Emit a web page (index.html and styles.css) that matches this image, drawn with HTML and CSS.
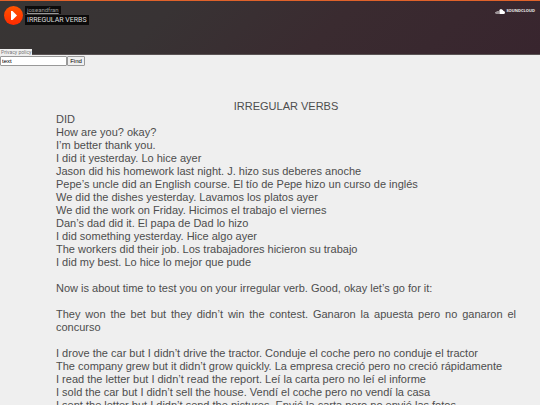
FILE: index.html
```html
<!DOCTYPE html>
<html lang="en">
<head>
    <meta charset="UTF-8">
    <meta name="viewport" content="width=device-width, initial-scale=1.0">
    <title>IRREGULAR VERBS</title>
    <link rel="stylesheet" href="styles.css">
</head>
<body>
    <!-- Audio player -->
    <header class="player">
        <button type="button" class="play" aria-label="Play">
            <svg viewBox="0 0 19 19" width="19" height="19">
                <path d="M7 5 L8.500 5 L13 9.500 L8.500 14 L7 14 Z" fill="#fff"/>
            </svg>
        </button>
        <div class="track">
            <a href="#" class="artist">joseandfran</a>
            <a href="#" class="title">IRREGULAR VERBS</a>
        </div>
        <a href="#" class="brand">
            <svg viewBox="0 0 20 10" width="10" height="5">
                <path d="M0 6h1v3H0zM2 5h1v5H2zM4 4h1v6H4zM6 4h1v6H6zM8 2h1v8H8z" fill="#fff"/>
                <path d="M9.500 1.200 Q11 0 13 .3 Q16.500 1 17 4 Q20 3.800 20 7 Q20 10 17 10 H9.500 Z" fill="#fff"/>
            </svg>
            SOUNDCLOUD
        </a>
        <a href="#" class="policy">Privacy policy</a>
    </header>

    <!-- Find in page -->
    <form class="find" id="findForm">
        <input type="text" value="text" aria-label="Text to find">
        <button type="submit">Find</button>
    </form>

    <!-- Transcript -->
    <main class="transcript">
        <h1>IRREGULAR VERBS</h1>
        <p>DID</p>
        <p>How are you? okay?</p>
        <p>I’m better thank you.</p>
        <p>I did it yesterday. Lo hice ayer</p>
        <p>Jason did his homework last night. J. hizo sus deberes anoche</p>
        <p>Pepe’s uncle did an English course. El tío de Pepe hizo un curso de inglés</p>
        <p>We did the dishes yesterday. Lavamos los platos ayer</p>
        <p>We did the work on Friday. Hicimos el trabajo el viernes</p>
        <p>Dan’s dad did it. El papa de Dad lo hizo</p>
        <p>I did something yesterday. Hice algo ayer</p>
        <p>The workers did their job. Los trabajadores hicieron su trabajo</p>
        <p>I did my best. Lo hice lo mejor que pude</p>
        <p class="break">Now is about time to test you on your irregular verb. Good, okay let’s go for it:</p>
        <p class="break">They won the bet but they didn’t win the contest. Ganaron la apuesta pero no ganaron el concurso</p>
        <p class="break">I drove the car but I didn’t drive the tractor. Conduje el coche pero no conduje el tractor</p>
        <p>The company grew but it didn’t grow quickly. La empresa creció pero no creció rápidamente</p>
        <p>I read the letter but I didn’t read the report. Leí la carta pero no leí el informe</p>
        <p>I sold the car but I didn’t sell the house. Vendí el coche pero no vendí la casa</p>
        <p>I sent the letter but I didn’t send the pictures. Envié la carta pero no envié las fotos</p>
    </main>
</body>
</html>
```
FILE: styles.css
```css
body {
    margin: 0;
    height: 100vh;
    overflow: hidden;
    background-color: #efefef;
    color: #4d4d4d;
    font-family: "Liberation Sans", Arial, sans-serif;
}

/* Audio player */
.player {
    position: relative;
    display: flex;
    align-items: flex-start;
    box-sizing: border-box;
    height: 55px;
    padding: 5px 5px 0 4px;
    border-top: 1px solid #e0622a;
    border-bottom: 1px solid #5a5354;
    background: linear-gradient(135deg, #383534 0%, #383334 30%, #3a2b30 60%, #38252e 100%);
    font-family: Roboto, "Liberation Sans", sans-serif;
}
.play {
    width: 19px;
    height: 19px;
    padding: 0;
    border: none;
    border-radius: 50%;
    background: linear-gradient(#ff5500, #ff2a00);
}
.play svg { display: block; }
.track {
    display: flex;
    flex-direction: column;
    align-items: flex-start;
    gap: 1px;
    margin-left: 2px;
}
.track a {
    padding: 0 2px;
    background-color: #0c0b0b;
}
.artist {
    color: #999;
    font-size: 6px;
    line-height: 8px;
}
.title {
    color: #ddd;
    font-size: 7px;
    line-height: 10px;
    text-decoration: none;
}
.brand {
    display: flex;
    align-items: center;
    gap: 1px;
    margin-left: auto;
    color: #eee;
    font-family: "Open Sans", "Liberation Sans", sans-serif;
    font-size: 4px;
    font-weight: bold;
    line-height: 10px;
    text-decoration: none;
}
.policy {
    position: absolute;
    left: 0;
    bottom: -1px;
    padding: 0 1px;
    background-color: #efefef;
    color: #777;
    font-size: 5px;
    line-height: 6px;
    text-decoration: none;
}

/* Find in page */
.find {
    display: flex;
    padding-top: 1px;
}
.find input,
.find button {
    box-sizing: border-box;
    height: 10px;
    border: 1px solid #999;
    border-radius: 1px;
    font-family: "Liberation Sans", Arial, sans-serif;
    font-size: 6px;
    line-height: 8px;
    color: #000;
}
.find input {
    width: 67px;
    padding: 0 1px;
    background-color: #fff;
}
.find button {
    width: 18px;
    padding: 0;
    background-color: #efefef;
}

/* Transcript */
.transcript {
    padding: 34px 24px 0 56px;
    font-size: 11px;
    line-height: 13px;
    text-align: justify;
}
.transcript h1 {
    margin: 0;
    font-size: 11px;
    font-weight: normal;
    text-align: center;
}
.transcript p { margin: 0; }
.transcript .break { margin-top: 13px; }
```
